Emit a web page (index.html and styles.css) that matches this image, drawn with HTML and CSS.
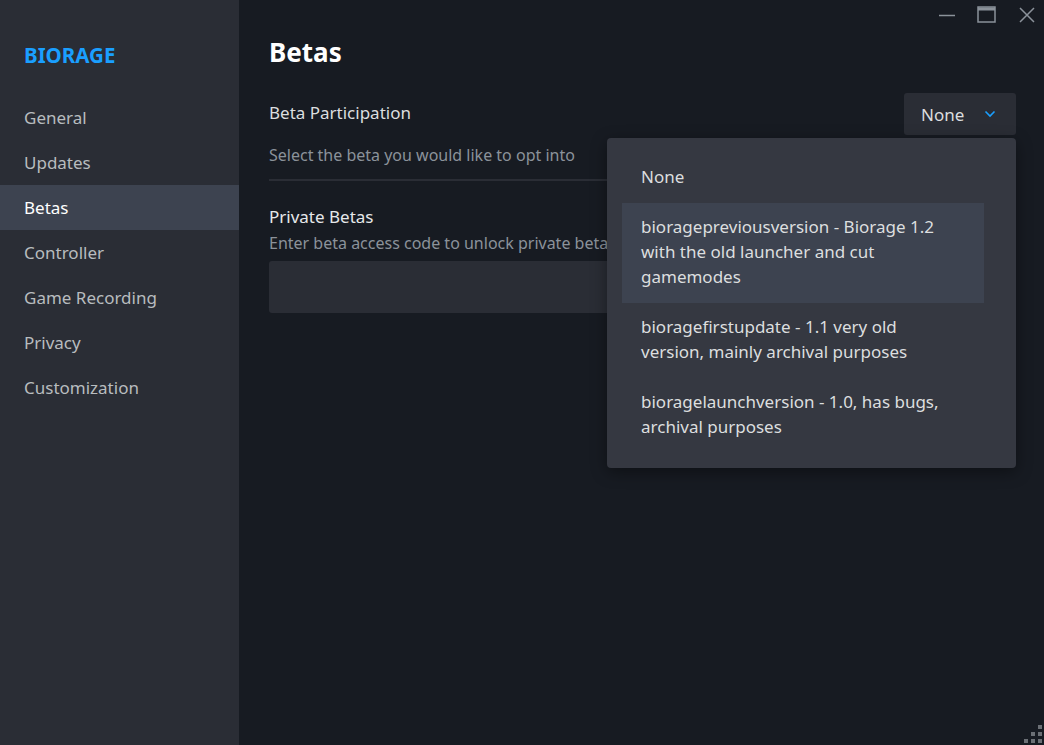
FILE: index.html
```html
<!DOCTYPE html>
<html lang="en">
<head>
    <meta charset="UTF-8">
    <meta name="viewport" content="width=device-width, initial-scale=1.0">
    <title>BIORAGE - Properties</title>
    <link rel="stylesheet" href="styles.css">
</head>
<body>
    <aside class="sidebar">
        <div class="game-title">BIORAGE</div>
        <nav class="nav">
            <div class="nav-item">General</div>
            <div class="nav-item">Updates</div>
            <div class="nav-item active">Betas</div>
            <div class="nav-item">Controller</div>
            <div class="nav-item">Game Recording</div>
            <div class="nav-item">Privacy</div>
            <div class="nav-item">Customization</div>
        </nav>
    </aside>

    <main class="content">
        <div class="window-controls">
            <svg class="win-btn" width="18" height="18" viewBox="0 0 18 18"><path d="M1 9.5h16" stroke="currentColor" stroke-width="1.5"/></svg>
            <svg class="win-btn" width="20" height="18" viewBox="0 0 20 18"><rect x="1" y="1" width="17" height="15" fill="none" stroke="currentColor" stroke-width="1.5"/><path d="M1 3h17" stroke="currentColor" stroke-width="3"/></svg>
            <svg class="win-btn" width="18" height="18" viewBox="0 0 18 18"><path d="M2 2l14 14M16 2L2 16" stroke="currentColor" stroke-width="1.5"/></svg>
        </div>

        <h1>Betas</h1>

        <div class="setting-row">
            <div class="setting-label">Beta Participation</div>
            <div class="dropdown">
                <span>None</span>
                <svg width="12" height="8" viewBox="0 0 12 8"><path d="M1.5 1.5l4.5 4.5 4.5-4.5" fill="none" stroke="#1a9fff" stroke-width="1.6"/></svg>
            </div>
        </div>
        <div class="setting-desc">Select the beta you would like to opt into</div>
        <div class="divider"></div>

        <div class="private">
            <div class="private-title">Private Betas</div>
            <div class="private-desc">Enter beta access code to unlock private betas:</div>
            <div class="code-input"></div>
        </div>

        <div class="menu">
            <div class="menu-item">None</div>
            <div class="menu-item hover">bioragepreviousversion - Biorage 1.2 with the old launcher and cut gamemodes</div>
            <div class="menu-item">bioragefirstupdate - 1.1 very old version, mainly archival purposes</div>
            <div class="menu-item">bioragelaunchversion - 1.0, has bugs, archival purposes</div>
        </div>

        <div class="grip">
            <i></i><i></i><i></i>
            <i></i><i></i><i></i>
        </div>
    </main>
</body>
</html>
```

FILE: styles.css
```css
body {
    margin: 0;
    height: 745px;
    display: flex;
    font-family: "Noto Sans", "Open Sans", Arial, sans-serif;
    background-color: #171b22;
    color: #dcdedf;
    overflow: hidden;
}
.sidebar {
    width: 239px;
    flex-shrink: 0;
    background-color: #2a2d35;
}
.game-title {
    padding: 41px 0 0 24px;
    height: 95px;
    box-sizing: border-box;
    font-size: 20.5px;
    font-weight: bold;
    line-height: 28px;
    color: #1a9fff;
}
.nav-item {
    height: 45px;
    line-height: 45px;
    padding-left: 24px;
    font-size: 17px;
    color: #b8bcbf;
}
.nav-item.active {
    background-color: #3d4350;
    color: #ffffff;
}
.content {
    flex: 1;
    position: relative;
    padding: 0 28px 0 30px;
}
.window-controls {
    position: absolute;
    top: 6px;
    right: 8px;
    display: flex;
    gap: 21px;
    color: #8b929a;
}
h1 {
    margin: 36px 0 0;
    font-size: 26px;
    line-height: 32px;
    font-weight: bold;
    color: #ffffff;
}
.setting-row {
    margin-top: 25px;
    display: flex;
    justify-content: space-between;
    align-items: center;
}
.setting-label {
    font-size: 17px;
    padding-bottom: 4px;
}
.dropdown {
    width: 112px;
    height: 42px;
    box-sizing: border-box;
    padding: 0 20px 0 17px;
    display: flex;
    align-items: center;
    justify-content: space-between;
    background-color: #2a2d35;
    border-radius: 3px;
    font-size: 17px;
    color: #dcdedf;
}
.setting-desc {
    margin-top: 9px;
    font-size: 16px;
    line-height: 22px;
    color: #8b929a;
}
.divider {
    margin-top: 13px;
    height: 2px;
    background-color: #2a2d35;
}
.private {
    margin-top: 24px;
}
.private-title {
    font-size: 17px;
    line-height: 24px;
    color: #e6e8ea;
}
.private-desc {
    margin-top: 2px;
    font-size: 16px;
    line-height: 24px;
    color: #8b929a;
}
.code-input {
    margin-top: 6px;
    height: 52px;
    background-color: #2a2d35;
    border-radius: 3px;
}
.menu {
    position: absolute;
    top: 138px;
    left: 368px;
    width: 409px;
    box-sizing: border-box;
    padding: 15px 32px 15px 15px;
    background-color: #353841;
    border-radius: 4px;
    box-shadow: 0 4px 16px rgba(0, 0, 0, 0.4);
}
.menu-item {
    padding: 10.5px 31px 14.5px 19px;
    font-size: 17px;
    line-height: 25px;
    color: #dcdedf;
}
.menu-item.hover {
    background-color: #3d4350;
}
.grip {
    position: absolute;
    right: 2px;
    bottom: 2px;
    width: 18px;
    height: 18px;
}
.grip i {
    position: absolute;
    width: 4px;
    height: 4px;
    background-color: #6b6f75;
}
.grip i:nth-child(1) { right: 0; top: 0; }
.grip i:nth-child(2) { right: 0; top: 7px; }
.grip i:nth-child(3) { right: 7px; top: 7px; }
.grip i:nth-child(4) { right: 0; top: 14px; }
.grip i:nth-child(5) { right: 7px; top: 14px; }
.grip i:nth-child(6) { right: 14px; top: 14px; }
```
